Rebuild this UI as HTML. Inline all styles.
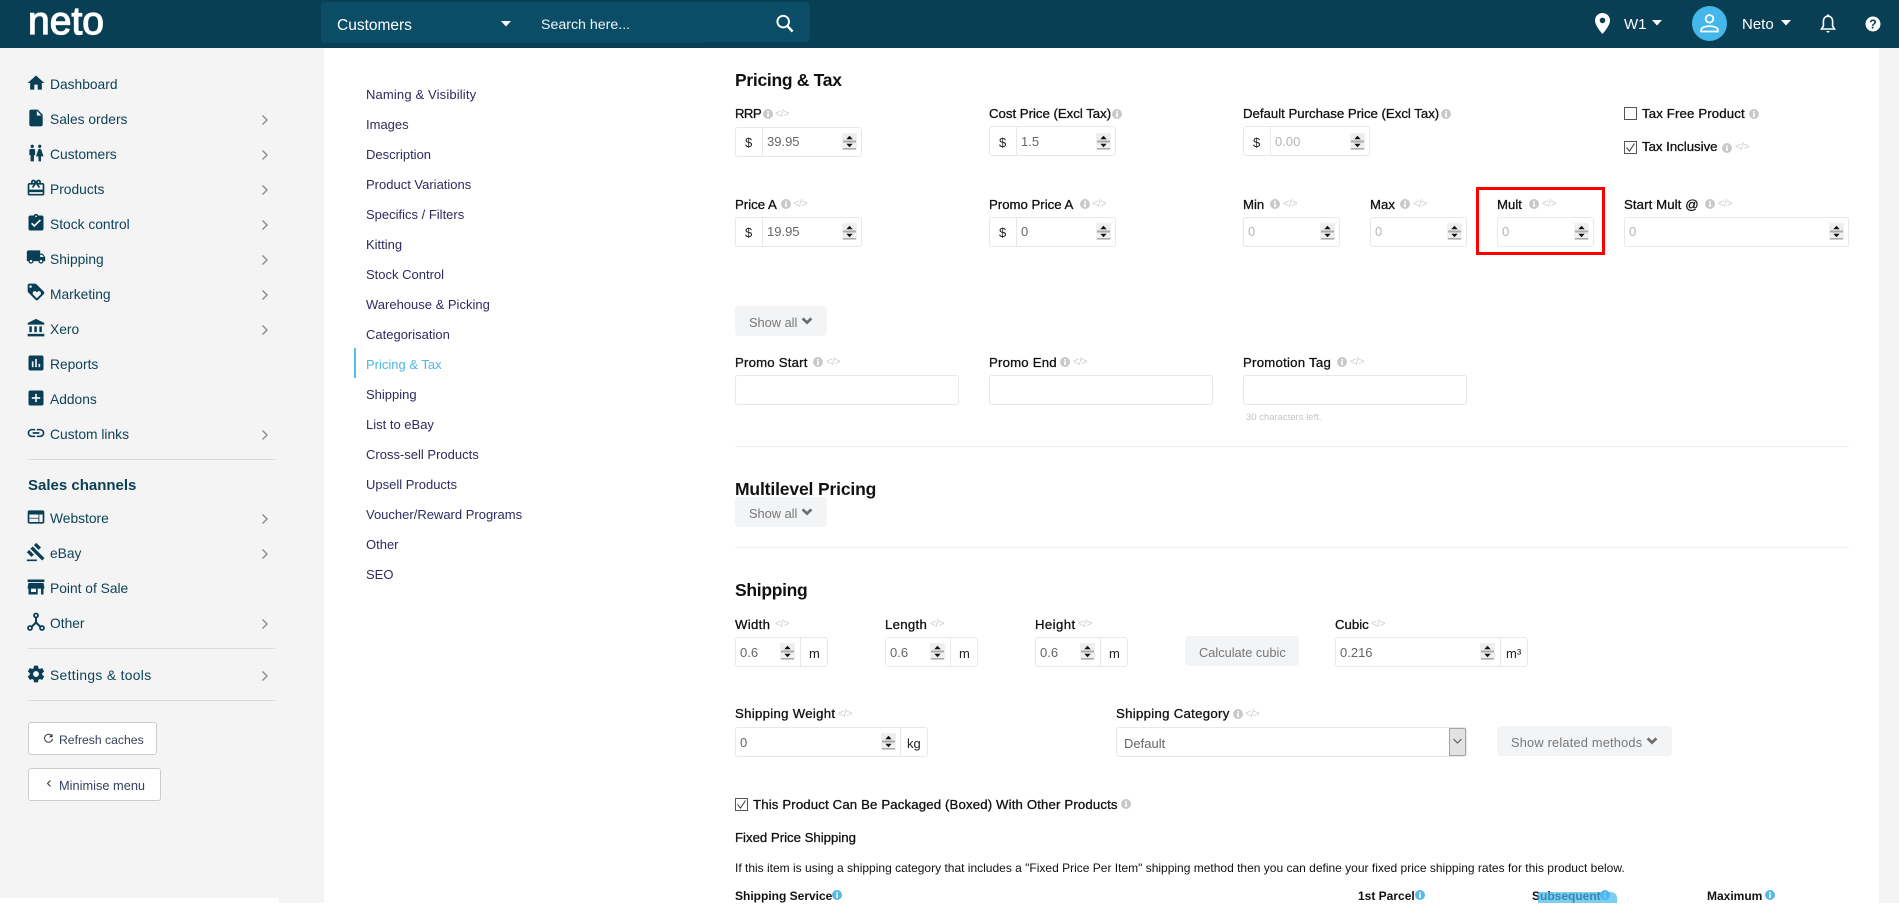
<!DOCTYPE html>
<html lang="en"><head><meta charset="utf-8"><title>Neto - Pricing &amp; Tax</title>
<style>
html,body{margin:0;padding:0;background:#fff}
body{position:relative;width:1899px;height:903px;overflow:hidden;font-family:"Liberation Sans",sans-serif;color:#111}
div,span,svg{position:absolute;box-sizing:border-box}
span{white-space:nowrap;line-height:20px;height:20px}
.m{left:50px;font-size:13.8px;color:#0f4257;margin-top:1px}
.ic{left:26px;width:20px;height:20px;fill:#083f54}
.ch{left:260px;width:10px;height:12px;fill:none;stroke:#8a8a8a;stroke-width:1.4}
.hr{left:28px;width:247px;height:1px;background:#ddd}
.sub{left:366px;font-size:13px;color:#2e2b5e;margin-top:1px}
.h{left:735px;font-size:17.5px;font-weight:bold;color:#111;height:24px;line-height:24px;letter-spacing:-.3px}
.l{font-size:13.2px;color:#111;-webkit-text-stroke:.3px #111}
.inp{background:#fff;border:1px solid #e8e8e8;border-radius:3px;height:30px}
.v{font-size:13px;color:#666;margin-top:1px}
.ph{font-size:13px;color:#b5b5b5;margin-top:1px}
.d{font-size:13px;color:#222;margin-top:1px}
.div{width:1px;height:28px;background:#e8e8e8}
.sp{width:15px;height:17px}
.btn{background:#f3f4f6;border-radius:4px;height:30px}
.bt{font-size:12.8px;color:#777;margin-top:1px}
.nf{width:10px;height:10px}
.cd{font-size:11px;color:#cfcfcf;letter-spacing:-.7px}
.side{background:#fff;border:1px solid #ccc;border-radius:3px;height:33px;left:28px}
.hrm{left:735px;width:1114px;height:1px;background:#f0f0f0}
.cb{width:13px;height:13px;border:1px solid #555;background:#fff}
.b{font-size:12px;font-weight:bold;color:#111}
</style></head><body>
<svg width="0" height="0" style="position:absolute"><defs>
<symbol id="nf" viewBox="0 0 10 10"><circle cx="5" cy="5" r="5" fill="#c9c9c9"/><rect x="4.2" y="4.2" width="1.7" height="3.8" fill="#fff"/><rect x="4.2" y="2" width="1.7" height="1.5" fill="#fff"/></symbol>
<symbol id="nb" viewBox="0 0 10 10"><circle cx="5" cy="5" r="5" fill="#57b9e8"/><rect x="4.2" y="4.2" width="1.7" height="3.8" fill="#fff"/><rect x="4.2" y="2" width="1.7" height="1.5" fill="#fff"/></symbol>
<symbol id="sp" viewBox="0 0 15 17"><rect width="15" height="17" fill="#f0f0f0"/><rect x="1" y="1" width="13" height="7" fill="#eee"/><rect x="1" y="7.500" width="13" height="2" fill="#aaa"/><rect x="1" y="15" width="13" height="1.500" fill="#aaa"/><path d="M7.500 2.800l3.200 3.400h-6.400z" fill="#111"/><path d="M7.500 14.200l-3.200-3.400h6.400z" fill="#111"/></symbol>
<symbol id="cv" viewBox="0 0 12 9"><path d="M1.600 1.400L6 5.600l4.400-4.200" fill="none" stroke="#6e6e6e" stroke-width="2.800"/></symbol>
<symbol id="chk" viewBox="0 0 13 13"><path d="M2.500 6.500l3 3.600 5-7.600" fill="none" stroke="#444" stroke-width="1.100"/></symbol>
</defs></svg>

<!-- header -->
<div style="left:0;top:0;width:1899px;height:48px;background:#083f54"></div>
<svg style="left:20px;top:0" width="100" height="48"><text x="8" y="34" font-family="Liberation Sans" font-size="39" fill="#fff" stroke="#fff" stroke-width="1.200" textLength="76">neto</text></svg>
<div style="left:321px;top:2px;width:489px;height:40px;background:#0b4d66;border-radius:4px"></div>
<div style="left:321px;top:2px;width:387px;height:41px;background:#0b4d66;border-radius:4px"></div>
<span style="left:337px;top:16px;font-size:15.500px;color:#fff">Customers</span>
<svg style="left:501px;top:21px" width="10" height="6"><path d="M0 0h10L5 5.500z" fill="#fff"/></svg>
<span style="left:541px;top:15px;font-size:14.200px;color:#eef4f7">Search here...</span>
<svg style="left:776px;top:14px" width="18" height="19" viewBox="0 0 18 19"><circle cx="7.200" cy="7.600" r="5.800" fill="none" stroke="#fff" stroke-width="1.900"/><path d="M11.400 12l5.200 5.600" stroke="#fff" stroke-width="2.400" fill="none"/></svg>
<svg style="left:1594px;top:12px" width="17" height="23" viewBox="0 0 17 23"><path fill="#fff" fill-rule="evenodd" d="M8.500 1C4.400 1 1 4.300 1 8.400 1 14 8.500 22 8.500 22S16 14 16 8.400C16 4.300 12.600 1 8.500 1zm0 10.200a2.800 2.800 0 1 1 0-5.600 2.800 2.800 0 0 1 0 5.600z"/></svg>
<span style="left:1624px;top:15px;font-size:15px;color:#fff">W1</span>
<svg style="left:1652px;top:20px" width="10" height="6"><path d="M0 0h10L5 5.500z" fill="#fff"/></svg>
<div style="left:1692px;top:6px;width:35px;height:35px;border-radius:50%;background:#45b7ea"></div>
<svg style="left:1699px;top:13px" width="21" height="21" viewBox="0 0 21 21"><circle cx="10.500" cy="5.800" r="3.800" fill="none" stroke="#fff" stroke-width="1.800"/><path d="M2.200 18.500v-1.800c0-2 3.800-3.600 8.300-3.600s8.300 1.600 8.300 3.600v1.800z" fill="none" stroke="#fff" stroke-width="1.800"/></svg>
<span style="left:1742px;top:15px;font-size:15px;color:#fff">Neto</span>
<svg style="left:1781px;top:20px" width="10" height="6"><path d="M0 0h10L5 5.500z" fill="#fff"/></svg>
<svg style="left:1820px;top:14px" width="16" height="20" viewBox="0 0 16 20"><path d="M8 2.200c-2.900 0-4.600 2.200-4.600 5v4.800L1.500 15h13l-1.900-3V7.200c0-2.800-1.700-5-4.600-5z" fill="none" stroke="#fff" stroke-width="1.600"/><path d="M6 17h4l-2 2z" fill="#fff"/><circle cx="8" cy="1.600" r="1.200" fill="#fff"/></svg>
<svg style="left:1865px;top:16px" width="16" height="16" viewBox="0 0 16 16"><circle cx="8" cy="8" r="7.500" fill="#fff"/><text x="8" y="12.500" text-anchor="middle" font-family="Liberation Sans" font-weight="bold" font-size="12.500" fill="#083f54">?</text></svg>

<!-- sidebar -->
<div style="left:0;top:48px;width:324px;height:855px;background:#f4f4f4"></div>
<div style="left:1879px;top:48px;width:20px;height:855px;background:#f4f4f4"></div>
<div style="left:0;top:898px;width:279px;height:5px;background:#fff"></div>

<svg class="ic" style="top:73px" viewBox="0 0 24 24"><path d="M10 20v-6h4v6h5v-8h3L12 3 2 12h3v8z"/></svg><span class="m" style="top:74px">Dashboard</span>
<svg class="ic" style="top:108px" viewBox="0 0 24 24"><path d="M6 2c-1.100 0-1.990.9-1.990 2L4 20c0 1.100.89 2 1.990 2H18c1.100 0 2-.9 2-2V8l-6-6H6zm7 7V3.500L18.500 9H13z"/></svg><span class="m" style="top:109px">Sales orders</span>
<svg class="ic" style="top:143px" viewBox="0 0 24 24"><path d="M5.500 22v-7.500H4V9c0-1.100.9-2 2-2h3c1.100 0 2 .9 2 2v5.500H9.500V22h-4zM18 22v-6h3l-2.540-7.630C18.180 7.550 17.420 7 16.560 7h-.12c-.86 0-1.630.55-1.900 1.370L12 16h3v6h3zM7.500 6c1.110 0 2-.89 2-2s-.89-2-2-2-2 .89-2 2 .89 2 2 2zm9 0c1.110 0 2-.89 2-2s-.89-2-2-2-2 .89-2 2 .89 2 2 2z"/></svg><span class="m" style="top:144px">Customers</span>
<svg class="ic" style="top:178px" viewBox="0 0 24 24"><path d="M20 6h-2.180c.11-.31.18-.65.18-1 0-1.660-1.340-3-3-3-1.050 0-1.960.54-2.500 1.350l-.5.67-.5-.68C10.960 2.540 10.050 2 9 2 7.340 2 6 3.340 6 5c0 .35.07.69.18 1H4c-1.110 0-1.990.89-1.990 2L2 19c0 1.110.89 2 2 2h16c1.110 0 2-.89 2-2V8c0-1.110-.89-2-2-2zm-5-2c.55 0 1 .45 1 1s-.45 1-1 1-1-.45-1-1 .45-1 1-1zM9 4c.55 0 1 .45 1 1s-.45 1-1 1-1-.45-1-1 .45-1 1-1zm11 15H4v-2h16v2zm0-5H4V8h5.080L7 10.830 8.620 12 11 8.760l1-1.360 1 1.360L15.380 12 17 10.830 14.920 8H20v6z"/></svg><span class="m" style="top:179px">Products</span>
<svg class="ic" style="top:213px" viewBox="0 0 24 24"><path d="M19 3h-4.180C14.400 1.840 13.300 1 12 1c-1.300 0-2.400.84-2.820 2H5c-1.100 0-2 .9-2 2v14c0 1.100.9 2 2 2h14c1.100 0 2-.9 2-2V5c0-1.100-.9-2-2-2zm-7 0c.55 0 1 .45 1 1s-.45 1-1 1-1-.45-1-1 .45-1 1-1zm-2 14l-4-4 1.410-1.410L10 14.170l6.590-6.590L18 9l-8 8z"/></svg><span class="m" style="top:214px">Stock control</span>
<svg class="ic" style="top:247px" viewBox="0 0 24 24"><path d="M20 8h-3V4H3c-1.100 0-2 .9-2 2v11h2c0 1.660 1.340 3 3 3s3-1.340 3-3h6c0 1.660 1.340 3 3 3s3-1.340 3-3h2v-5l-3-4zM6 18.500c-.83 0-1.500-.67-1.500-1.500s.67-1.500 1.500-1.500 1.500.67 1.500 1.500-.67 1.500-1.500 1.500zm13.500-9l1.960 2.500H17V9.500h2.500zm-1.500 9c-.83 0-1.500-.67-1.500-1.500s.67-1.500 1.500-1.500 1.500.67 1.500 1.500-.67 1.500-1.500 1.500z"/></svg><span class="m" style="top:249px">Shipping</span>
<svg class="ic" style="top:282px" viewBox="0 0 24 24"><path d="M21.410 11.580l-9-9C12.050 2.220 11.550 2 11 2H4c-1.100 0-2 .9-2 2v7c0 .55.22 1.050.59 1.420l9 9c.36.36.86.58 1.410.58.55 0 1.050-.22 1.410-.59l7-7c.37-.36.59-.86.59-1.410 0-.55-.23-1.060-.59-1.420zM5.500 7C4.670 7 4 6.330 4 5.500S4.670 4 5.500 4 7 4.670 7 5.500 6.330 7 5.500 7zm11.770 8.270L13 19.540l-4.270-4.270C8.280 14.810 8 14.190 8 13.500c0-1.380 1.120-2.500 2.500-2.500.69 0 1.320.28 1.770.74l.73.72.73-.73c.45-.45 1.080-.73 1.770-.73 1.380 0 2.500 1.120 2.500 2.500 0 .69-.28 1.320-.73 1.770z"/></svg><span class="m" style="top:284px">Marketing</span>
<svg class="ic" style="top:318px" viewBox="0 0 24 24"><path d="M4 10v7h3v-7H4zm6 0v7h3v-7h-3zM2 22h20v-3H2v3zm14-12v7h3v-7h-3zm-4-9L2 6v2h20V6L12 1z"/></svg><span class="m" style="top:319px">Xero</span>
<svg class="ic" style="top:353px" viewBox="0 0 24 24"><path d="M19 3H5c-1.100 0-2 .9-2 2v14c0 1.100.9 2 2 2h14c1.100 0 2-.9 2-2V5c0-1.100-.9-2-2-2zM9 17H7v-7h2v7zm4 0h-2V7h2v10zm4 0h-2v-4h2v4z"/></svg><span class="m" style="top:354px">Reports</span>
<svg class="ic" style="top:388px" viewBox="0 0 24 24"><path d="M19 3H5c-1.110 0-2 .9-2 2v14c0 1.100.89 2 2 2h14c1.100 0 2-.9 2-2V5c0-1.100-.9-2-2-2zm-2 10h-4v4h-2v-4H7v-2h4V7h2v4h4v2z"/></svg><span class="m" style="top:389px">Addons</span>
<svg class="ic" style="top:423px" viewBox="0 0 24 24"><path d="M3.900 12c0-1.710 1.390-3.100 3.100-3.100h4V7H7c-2.760 0-5 2.240-5 5s2.240 5 5 5h4v-1.900H7c-1.710 0-3.100-1.390-3.100-3.100zM8 13h8v-2H8v2zm9-6h-4v1.900h4c1.710 0 3.100 1.390 3.100 3.100s-1.390 3.100-3.100 3.100h-4V17h4c2.760 0 5-2.240 5-5s-2.240-5-5-5z"/></svg><span class="m" style="top:424px">Custom links</span>

<svg class="ch" style="top:114px" viewBox="0 0 10 12"><path d="M2.500 1.500L7 6l-4.500 4.500"/></svg>
<svg class="ch" style="top:149px" viewBox="0 0 10 12"><path d="M2.500 1.500L7 6l-4.500 4.500"/></svg>
<svg class="ch" style="top:184px" viewBox="0 0 10 12"><path d="M2.500 1.500L7 6l-4.500 4.500"/></svg>
<svg class="ch" style="top:219px" viewBox="0 0 10 12"><path d="M2.500 1.500L7 6l-4.500 4.500"/></svg>
<svg class="ch" style="top:254px" viewBox="0 0 10 12"><path d="M2.500 1.500L7 6l-4.500 4.500"/></svg>
<svg class="ch" style="top:289px" viewBox="0 0 10 12"><path d="M2.500 1.500L7 6l-4.500 4.500"/></svg>
<svg class="ch" style="top:324px" viewBox="0 0 10 12"><path d="M2.500 1.500L7 6l-4.500 4.500"/></svg>
<svg class="ch" style="top:429px" viewBox="0 0 10 12"><path d="M2.500 1.500L7 6l-4.500 4.500"/></svg>

<div class="hr" style="top:459px"></div>
<span style="left:28px;top:476px;font-size:15px;font-weight:bold;color:#083f54">Sales channels</span>
<svg class="ic" style="top:507px" viewBox="0 0 24 24"><path d="M20 4H4c-1.100 0-1.990.9-1.990 2L2 18c0 1.100.9 2 2 2h16c1.100 0 2-.9 2-2V6c0-1.100-.9-2-2-2zm-5 14H4v-4h11v4zm0-5H4V9h11v4zm5 5h-4V9h4v9z"/></svg><span class="m" style="top:508px">Webstore</span>
<svg class="ic" style="top:542px" viewBox="0 0 24 24"><path d="M1 21h12v2H1zM5.245 8.070l2.830-2.827 14.140 14.142-2.828 2.828zM12.317 1l5.657 5.656-2.830 2.830-5.654-5.660zM3.825 9.485l5.657 5.657-2.828 2.828-5.657-5.657z"/></svg><span class="m" style="top:543px">eBay</span>
<svg class="ic" style="top:577px" viewBox="0 0 24 24"><path d="M22 3H2v3h20V3zm0 11v-2l-1-5H3l-1 5v2h1v7h11v-7h4v7h3v-7h1zm-10 4H6v-4h6v4z"/></svg><span class="m" style="top:578px">Point of Sale</span>
<svg class="ic" style="top:612px" viewBox="0 0 20 20"><g fill="none" stroke="#083f54" stroke-width="1.800"><circle cx="10" cy="3.500" r="2"/><circle cx="4" cy="16" r="2"/><circle cx="16" cy="16" r="2"/></g><path d="M9 6h2v4l4.500 4.500-1.400 1.400L10 12l-4.100 3.900-1.400-1.400L9 10z" fill="#083f54"/></svg><span class="m" style="top:613px">Other</span>
<div class="hr" style="top:648px"></div>
<svg class="ic" style="top:664px" viewBox="0 0 24 24"><path d="M19.430 12.980c.04-.32.07-.64.07-.98s-.03-.66-.07-.98l2.110-1.650c.19-.15.24-.42.12-.64l-2-3.460c-.12-.22-.39-.3-.61-.22l-2.490 1c-.52-.4-1.080-.73-1.690-.98l-.38-2.650C14.460 2.180 14.250 2 14 2h-4c-.25 0-.46.18-.49.42l-.38 2.650c-.61.25-1.170.59-1.690.98l-2.490-1c-.23-.09-.49 0-.61.22l-2 3.460c-.13.22-.07.49.12.64l2.110 1.650c-.04.32-.07.65-.07.98s.03.66.07.98l-2.110 1.650c-.19.15-.24.42-.12.64l2 3.460c.12.22.39.3.61.22l2.490-1c.52.4 1.080.73 1.690.98l.38 2.650c.03.24.24.42.49.42h4c.25 0 .46-.18.49-.42l.38-2.650c.61-.25 1.170-.59 1.690-.98l2.490 1c.23.09.49 0 .61-.22l2-3.460c.12-.22.07-.49-.12-.64l-2.110-1.650zM12 15.500c-1.930 0-3.500-1.570-3.500-3.500s1.570-3.500 3.500-3.500 3.500 1.570 3.500 3.500-1.570 3.500-3.500 3.500z"/></svg><span class="m" style="top:665px;letter-spacing:.35px">Settings &amp; tools</span>
<div class="hr" style="top:700px"></div>
<svg class="ch" style="top:513px" viewBox="0 0 10 12"><path d="M2.500 1.500L7 6l-4.500 4.500"/></svg>
<svg class="ch" style="top:548px" viewBox="0 0 10 12"><path d="M2.500 1.500L7 6l-4.500 4.500"/></svg>
<svg class="ch" style="top:618px" viewBox="0 0 10 12"><path d="M2.500 1.500L7 6l-4.500 4.500"/></svg>
<svg class="ch" style="top:670px" viewBox="0 0 10 12"><path d="M2.500 1.500L7 6l-4.500 4.500"/></svg>

<div class="side" style="top:722px;width:129px"></div>
<svg style="left:43px;top:733px" width="11" height="11" viewBox="0 0 11 11"><path d="M9 3.200A4 4 0 1 0 9.500 6" fill="none" stroke="#333" stroke-width="1"/><path d="M9.500 .8v3.400H6z" fill="#333"/></svg>
<span style="left:59px;top:730px;font-size:12.200px;color:#36415a">Refresh caches</span>
<div class="side" style="top:768px;width:133px"></div>
<svg style="left:45px;top:779px" width="8" height="10" viewBox="0 0 8 10"><path d="M5.500 1.500L2.500 4.500l3 3" fill="none" stroke="#333" stroke-width="1"/></svg>
<span style="left:59px;top:776px;font-size:12.800px;color:#36415a">Minimise menu</span>

<!-- sub nav -->
<span class="sub" style="top:84px;letter-spacing:.15px">Naming &amp; Visibility</span>
<span class="sub" style="top:114px">Images</span>
<span class="sub" style="top:144px">Description</span>
<span class="sub" style="top:174px">Product Variations</span>
<span class="sub" style="top:204px">Specifics / Filters</span>
<span class="sub" style="top:234px">Kitting</span>
<span class="sub" style="top:264px">Stock Control</span>
<span class="sub" style="top:294px">Warehouse &amp; Picking</span>
<span class="sub" style="top:324px">Categorisation</span>
<div style="left:354px;top:348px;width:2px;height:30px;background:#52bdf0"></div>
<span class="sub" style="top:354px;color:#4bb8ec">Pricing &amp; Tax</span>
<span class="sub" style="top:384px">Shipping</span>
<span class="sub" style="top:414px">List to eBay</span>
<span class="sub" style="top:444px">Cross-sell Products</span>
<span class="sub" style="top:474px">Upsell Products</span>
<span class="sub" style="top:504px">Voucher/Reward Programs</span>
<span class="sub" style="top:534px">Other</span>
<span class="sub" style="top:564px">SEO</span>

<!-- Pricing & Tax -->
<span class="h" style="top:68px">Pricing &amp; Tax</span>

<span class="l" style="left:735px;top:104px;letter-spacing:-.6px">RRP</span><svg class="nf" style="left:763px;top:109px"><use href="#nf"/></svg><span class="cd" style="left:775px;top:104px">&lt;/&gt;</span>
<div class="inp" style="left:735px;top:127px;width:127px"></div><div class="div" style="left:762px;top:128px"></div><span class="d" style="left:745px;top:132px">$</span><span class="v" style="left:767px;top:131px">39.95</span><svg class="sp" style="left:842px;top:133px"><use href="#sp"/></svg>

<span class="l" style="left:989px;top:104px">Cost Price (Excl Tax)</span><svg class="nf" style="left:1112px;top:109px"><use href="#nf"/></svg>
<div class="inp" style="left:989px;top:126px;width:127px"></div><div class="div" style="left:1016px;top:127px"></div><span class="d" style="left:999px;top:132px">$</span><span class="v" style="left:1021px;top:131px">1.5</span><svg class="sp" style="left:1096px;top:133px"><use href="#sp"/></svg>

<span class="l" style="left:1243px;top:104px">Default Purchase Price (Excl Tax)</span><svg class="nf" style="left:1441px;top:109px"><use href="#nf"/></svg>
<div class="inp" style="left:1243px;top:126px;width:127px"></div><div class="div" style="left:1270px;top:127px"></div><span class="d" style="left:1253px;top:132px">$</span><span class="ph" style="left:1275px;top:131px">0.00</span><svg class="sp" style="left:1350px;top:133px"><use href="#sp"/></svg>

<div class="cb" style="left:1624px;top:107px"></div><span class="l" style="left:1642px;top:104px;letter-spacing:.15px">Tax Free Product</span><svg class="nf" style="left:1749px;top:109px"><use href="#nf"/></svg>
<div class="cb" style="left:1624px;top:141px"></div><svg style="left:1624px;top:141px" width="13" height="13"><use href="#chk"/></svg><span class="l" style="left:1642px;top:137px">Tax Inclusive</span><svg class="nf" style="left:1722px;top:143px"><use href="#nf"/></svg><span class="cd" style="left:1735px;top:137px">&lt;/&gt;</span>

<span class="l" style="left:735px;top:195px">Price A</span><svg class="nf" style="left:781px;top:199px"><use href="#nf"/></svg><span class="cd" style="left:793px;top:194px">&lt;/&gt;</span>
<div class="inp" style="left:735px;top:217px;width:127px"></div><div class="div" style="left:762px;top:218px"></div><span class="d" style="left:745px;top:222px">$</span><span class="v" style="left:767px;top:221px">19.95</span><svg class="sp" style="left:842px;top:223px"><use href="#sp"/></svg>

<span class="l" style="left:989px;top:195px">Promo Price A</span><svg class="nf" style="left:1080px;top:199px"><use href="#nf"/></svg><span class="cd" style="left:1092px;top:194px">&lt;/&gt;</span>
<div class="inp" style="left:989px;top:217px;width:127px"></div><div class="div" style="left:1016px;top:218px"></div><span class="d" style="left:999px;top:222px">$</span><span class="v" style="left:1021px;top:221px">0</span><svg class="sp" style="left:1096px;top:223px"><use href="#sp"/></svg>

<span class="l" style="left:1243px;top:195px">Min</span><svg class="nf" style="left:1270px;top:199px"><use href="#nf"/></svg><span class="cd" style="left:1283px;top:194px">&lt;/&gt;</span>
<div class="inp" style="left:1243px;top:217px;width:97px"></div><span class="ph" style="left:1248px;top:221px">0</span><svg class="sp" style="left:1320px;top:223px"><use href="#sp"/></svg>

<span class="l" style="left:1370px;top:195px">Max</span><svg class="nf" style="left:1400px;top:199px"><use href="#nf"/></svg><span class="cd" style="left:1413px;top:194px">&lt;/&gt;</span>
<div class="inp" style="left:1370px;top:217px;width:97px"></div><span class="ph" style="left:1375px;top:221px">0</span><svg class="sp" style="left:1447px;top:223px"><use href="#sp"/></svg>

<div style="left:1476px;top:187px;width:129px;height:68px;border:3px solid #f00"></div>
<span class="l" style="left:1497px;top:195px">Mult</span><svg class="nf" style="left:1529px;top:199px"><use href="#nf"/></svg><span class="cd" style="left:1542px;top:194px">&lt;/&gt;</span>
<div class="inp" style="left:1497px;top:217px;width:97px"></div><span class="ph" style="left:1502px;top:221px">0</span><svg class="sp" style="left:1574px;top:223px"><use href="#sp"/></svg>

<span class="l" style="left:1624px;top:195px;letter-spacing:.1px">Start Mult @</span><svg class="nf" style="left:1705px;top:199px"><use href="#nf"/></svg><span class="cd" style="left:1718px;top:194px">&lt;/&gt;</span>
<div class="inp" style="left:1624px;top:217px;width:225px"></div><span class="ph" style="left:1629px;top:221px">0</span><svg class="sp" style="left:1829px;top:223px"><use href="#sp"/></svg>

<div class="btn" style="left:735px;top:306px;width:92px"></div><span class="bt" style="left:749px;top:312px">Show all</span><svg style="left:801px;top:317px" width="12" height="9"><use href="#cv"/></svg>

<span class="l" style="left:735px;top:353px;letter-spacing:.2px">Promo Start</span><svg class="nf" style="left:813px;top:357px"><use href="#nf"/></svg><span class="cd" style="left:826px;top:352px">&lt;/&gt;</span>
<div class="inp" style="left:735px;top:375px;width:224px"></div>
<span class="l" style="left:989px;top:353px;letter-spacing:.2px">Promo End</span><svg class="nf" style="left:1060px;top:357px"><use href="#nf"/></svg><span class="cd" style="left:1073px;top:352px">&lt;/&gt;</span>
<div class="inp" style="left:989px;top:375px;width:224px"></div>
<span class="l" style="left:1243px;top:353px;letter-spacing:.25px">Promotion Tag</span><svg class="nf" style="left:1337px;top:357px"><use href="#nf"/></svg><span class="cd" style="left:1350px;top:352px">&lt;/&gt;</span>
<div class="inp" style="left:1243px;top:375px;width:224px"></div>
<span style="left:1246px;top:408px;font-size:9.500px;color:#c4c4c4">30 characters left.</span>
<div class="hrm" style="top:446px"></div>

<!-- Multilevel -->
<span class="h" style="top:477px;letter-spacing:-.15px">Multilevel Pricing</span>
<div class="btn" style="left:735px;top:497px;width:92px"></div><span class="bt" style="left:749px;top:503px">Show all</span><svg style="left:801px;top:508px" width="12" height="9"><use href="#cv"/></svg>
<div class="hrm" style="top:547px"></div>

<!-- Shipping -->
<span class="h" style="top:578px">Shipping</span>

<span class="l" style="left:735px;top:615px;letter-spacing:.3px">Width</span><span class="cd" style="left:775px;top:614px">&lt;/&gt;</span>
<div class="inp" style="left:735px;top:637px;width:93px"></div><span class="v" style="left:740px;top:642px">0.6</span><svg class="sp" style="left:780px;top:643px"><use href="#sp"/></svg><div class="div" style="left:800px;top:638px"></div><span class="d" style="left:809px;top:643px">m</span>

<span class="l" style="left:885px;top:615px;letter-spacing:.3px">Length</span><span class="cd" style="left:930px;top:614px">&lt;/&gt;</span>
<div class="inp" style="left:885px;top:637px;width:93px"></div><span class="v" style="left:890px;top:642px">0.6</span><svg class="sp" style="left:930px;top:643px"><use href="#sp"/></svg><div class="div" style="left:950px;top:638px"></div><span class="d" style="left:959px;top:643px">m</span>

<span class="l" style="left:1035px;top:615px;letter-spacing:.4px">Height</span><span class="cd" style="left:1078px;top:614px">&lt;/&gt;</span>
<div class="inp" style="left:1035px;top:637px;width:93px"></div><span class="v" style="left:1040px;top:642px">0.6</span><svg class="sp" style="left:1080px;top:643px"><use href="#sp"/></svg><div class="div" style="left:1100px;top:638px"></div><span class="d" style="left:1109px;top:643px">m</span>

<div class="btn" style="left:1185px;top:636px;width:114px"></div><span class="bt" style="left:1199px;top:642px">Calculate cubic</span>

<span class="l" style="left:1335px;top:615px">Cubic</span><span class="cd" style="left:1371px;top:614px">&lt;/&gt;</span>
<div class="inp" style="left:1335px;top:637px;width:193px"></div><span class="v" style="left:1340px;top:642px">0.216</span><svg class="sp" style="left:1480px;top:643px"><use href="#sp"/></svg><div class="div" style="left:1500px;top:638px"></div><span class="d" style="left:1506px;top:643px">m³</span>

<span class="l" style="left:735px;top:704px;letter-spacing:.3px">Shipping Weight</span><span class="cd" style="left:838px;top:704px">&lt;/&gt;</span>
<div class="inp" style="left:735px;top:727px;width:193px"></div><span class="v" style="left:740px;top:732px">0</span><svg class="sp" style="left:881px;top:733px"><use href="#sp"/></svg><div class="div" style="left:900px;top:728px"></div><span class="d" style="left:907px;top:733px">kg</span>

<span class="l" style="left:1116px;top:704px;letter-spacing:.3px">Shipping Category</span><svg class="nf" style="left:1233px;top:709px"><use href="#nf"/></svg><span class="cd" style="left:1245px;top:704px">&lt;/&gt;</span>
<div class="inp" style="left:1116px;top:727px;width:351px"></div><span class="v" style="left:1124px;top:733px">Default</span>
<div style="left:1449px;top:728px;width:17px;height:28px;background:#e2e2e2;border:1px solid #a5a5a5;border-radius:0 2px 2px 0"></div>
<svg style="left:1452px;top:738px" width="11" height="7"><path d="M1.500 1l4 4 4-4" fill="none" stroke="#555" stroke-width="1"/></svg>

<div class="btn" style="left:1497px;top:726px;width:175px"></div><span class="bt" style="left:1511px;top:732px;letter-spacing:.2px">Show related methods</span><svg style="left:1646px;top:737px" width="12" height="9"><use href="#cv"/></svg>

<div class="cb" style="left:735px;top:798px"></div><svg style="left:735px;top:798px" width="13" height="13"><use href="#chk"/></svg>
<span class="l" style="left:753px;top:795px;letter-spacing:.15px">This Product Can Be Packaged (Boxed) With Other Products</span><svg class="nf" style="left:1121px;top:799px"><use href="#nf"/></svg>
<span class="l" style="left:735px;top:828px">Fixed Price Shipping</span>
<span style="left:735px;top:858px;font-size:12px;color:#111">If this item is using a shipping category that includes a "Fixed Price Per Item" shipping method then you can define your fixed price shipping rates for this product below.</span>
<span class="b" style="left:735px;top:886px">Shipping Service</span><svg class="nf" style="left:832px;top:890px"><use href="#nb"/></svg>
<span class="b" style="left:1358px;top:886px">1st Parcel</span><svg class="nf" style="left:1415px;top:890px"><use href="#nb"/></svg>
<span class="b" style="left:1532px;top:886px">Subsequent</span><svg class="nf" style="left:1600px;top:890px"><use href="#nb"/></svg>
<span class="b" style="left:1707px;top:886px">Maximum</span><svg class="nf" style="left:1765px;top:890px"><use href="#nb"/></svg>
<div style="left:1538px;top:892px;width:79px;height:11px;background:rgba(70,185,240,.7);border-radius:0 6px 0 0"></div>
</body></html>
